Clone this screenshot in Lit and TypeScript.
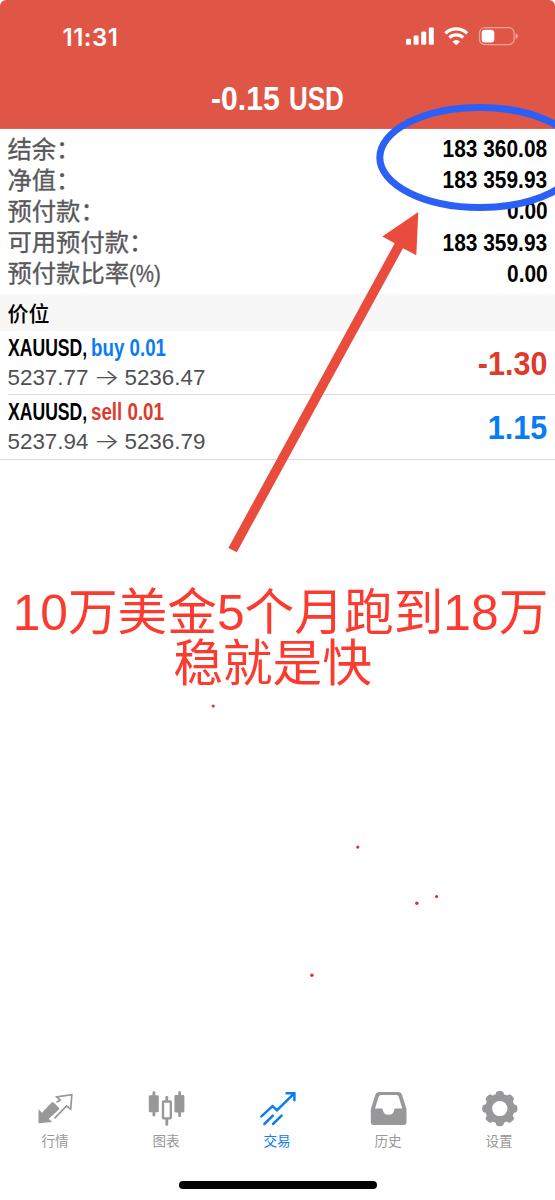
import { LitElement, html, css, svg } from "lit";
import { customElement } from "lit/decorators.js";

const summary = [
  { label: "结余：", suffix: "", value: "183 360.08" },
  { label: "净值：", suffix: "", value: "183 359.93" },
  { label: "预付款：", suffix: "", value: "0.00" },
  { label: "可用预付款：", suffix: "", value: "183 359.93" },
  { label: "预付款比率", suffix: "(%)", value: "0.00" },
];

const positions = [
  { symbol: "XAUUSD,", side: "buy", volume: "0.01", open: "5237.77", now: "5236.47", profit: "-1.30", tone: "red" },
  { symbol: "XAUUSD,", side: "sell", volume: "0.01", open: "5237.94", now: "5236.79", profit: "1.15", tone: "blue" },
];

const icons = {
  quotes: svg`
    <path fill="currentColor" d="M2.5 20.3 6 23.8 15.6 13.6q1-.8 2 0L22.9 18.8q.7.9 0 1.8L12.7 29.8 16.2 33 2.5 34.2Z"/>
    <path fill="none" stroke="currentColor" stroke-width="1.7" d="M20.5 13.2 24.2 11 20.8 7.9 35.8 5.7 34.7 20.2 30.6 17 18.5 29.4"/>`,
  chart: svg`
    <g fill="currentColor">
      <rect x="1.8" y="6.2" width="10" height="17" rx="1.3"/><rect x="5.5" y="2.2" width="2.8" height="25.2" rx="1.3"/>
      <rect x="27.4" y="6.1" width="10" height="17.3" rx="1.3"/><rect x="31.2" y="2.2" width="2.8" height="25.8" rx="1.3"/>
      <rect x="18.4" y="7" width="2.8" height="5.5" rx="1.2"/><rect x="18.4" y="29" width="2.8" height="7.8" rx="1.2"/>
    </g>
    <rect x="16" y="12.5" width="7.8" height="16.8" fill="none" stroke="currentColor" stroke-width="2.3" rx=".5"/>`,
  trade: svg`
    <path fill="none" stroke="currentColor" stroke-width="2.5" stroke-linecap="round" stroke-linejoin="miter"
      d="M3.4 27.4 14.6 17.1 19 21.2 36 4.6M28.6 4.3H36.4V11.2M6.4 35 14.8 26.6M15 35 23.6 26.6"/>`,
  history: svg`
    <path fill="currentColor" fill-rule="evenodd"
      d="M10.5 3H29Q32 3 33 5.8L37.5 20V33.6Q37.5 35.9 35.2 35.9H4.1Q1.8 35.9 1.8 33.6V20L6.4 5.8Q7.4 3 10.5 3ZM11.6 6Q10.2 6 9.7 7.5L6 19.4H12.6Q13.8 19.4 13.8 20.8A5.8 5.8 0 0 0 25.3 20.8Q25.3 19.4 26.5 19.4H33.3L29.6 7.5Q29.1 6 27.7 6Z"/>`,
  settings: svg`
    <g fill="currentColor">
      <circle cx="19.8" cy="19.6" r="14.8"/>
      ${[0, 45, 90, 135].map(
        (a) => svg`<rect x="15.7" y="2" width="8.2" height="35.2" rx="3.4" transform="rotate(${a} 19.8 19.6)"/>`
      )}
    </g>
    <circle cx="19.8" cy="19.6" r="7.7" fill="#fff"/>`,
};

const tabs = [
  { text: "行情", icon: icons.quotes, active: false },
  { text: "图表", icon: icons.chart, active: false },
  { text: "交易", icon: icons.trade, active: true },
  { text: "历史", icon: icons.history, active: false },
  { text: "设置", icon: icons.settings, active: false },
];

@customElement("app-root")
export class AppRoot extends LitElement {
  static styles = css`
    :host {
      display: flex;
      flex-direction: column;
      position: relative;
      width: 555px;
      height: 1200px;
      overflow: hidden;
      background: #fff;
      color: #000;
      font-family: "Liberation Sans", "Noto Sans CJK SC", sans-serif;
    }
    header {
      height: 129px;
      box-sizing: border-box;
      background: #df5646;
      border-bottom: 1px solid #d0695c;
      border-radius: 6px 6px 0 0;
      color: #fff;
    }
    .status {
      display: flex;
      justify-content: space-between;
      align-items: center;
      height: 74px;
      padding: 0 36px 0 62.5px;
    }
    .clock {
      font: 600 24px/28px Inter, sans-serif;
      letter-spacing: 0.5px;
      padding-top: 1px;
    }
    .status svg { display: block; }
    .total {
      display: flex;
      justify-content: center;
      gap: 9px;
      height: 50px;
      font-weight: 700;
      font-size: 33.5px;
      line-height: 50px;
    }
    .total span { display: block; white-space: nowrap; }
    .total .sum { width: 69px; }
    .total .cur { width: 55px; }
    .narrow { display: block; width: max-content; transform-origin: 0 50%; }
    .sum .narrow { transform: scaleX(0.9); }
    .cur .narrow { transform: scaleX(0.775); }
    .summary { padding: 4px 7.5px 0 7.5px; height: 165px; box-sizing: border-box; }
    .line {
      display: flex;
      justify-content: space-between;
      height: 31.2px;
      line-height: 31px;
      font-size: 24.3px;
    }
    .label {
      display: flex;
      padding-top: 0.5px;
      color: #58585a;
      -webkit-text-stroke: 0.3px #58585a;
    }
    .suffix {
      transform: scaleX(0.84);
      transform-origin: 0 50%;
    }
    .value {
      font-weight: 700;
      transform: scaleX(0.87);
      transform-origin: 100% 50%;
      font-size: 24px;
    }
    .section {
      height: 37px;
      padding-left: 7.5px;
      background: #f7f7f7;
      font: 500 21px/36px "Noto Sans CJK SC", sans-serif;
    }
    .position {
      display: flex;
      justify-content: space-between;
      align-items: center;
      height: 64px;
      box-sizing: border-box;
      margin-left: 7.5px;
      padding-right: 7.5px;
      border-bottom: 1px solid #dcdcdc;
    }
    .position.last { margin-left: 0; padding-left: 7.5px; height: 64.5px; }
    .deal { display: flex; height: 30px; font-weight: 700; font-size: 23px; line-height: 31px; }
    .symbol { width: 83.5px; }
    .symbol .narrow { transform: scaleX(0.765); }
    .side .narrow { transform: scaleX(0.815); }
    .buy, .blue { color: #097cf5; }
    .sell, .red { color: #dd3b2c; }
    .prices { display: flex; height: 30px; font-size: 22.4px; line-height: 30px; color: #505054; }
    .to {
      display: flex;
      align-items: center;
      justify-content: center;
      width: 36px;
      font: 300 22px/28px Inter, sans-serif;
      height: 28px;
    }
    .to span { transform: scaleX(1.25); }
    .profit {
      padding-top: 2px;
      font-weight: 700;
      font-size: 33.5px;
      line-height: 60px;
      transform: scaleX(0.91);
      transform-origin: 100% 50%;
    }
    .caption {
      flex: 1;
      padding-top: 128px;
      color: #fb3b30;
      font-size: 49.7px;
      line-height: 51.3px;
      text-align: center;
      white-space: nowrap;
    }
    .first { padding-left: 6px; }
    .second { padding-right: 10px; }
    nav { display: grid; grid-template-columns: repeat(5, 1fr); height: 92px; }
    .tab { display: flex; flex-direction: column; align-items: center; color: #98989a; }
    .tab.active { color: #0a7cf4; }
    .tab svg { display: block; }
    .tab span { font: 400 13.6px/20px "Noto Sans CJK SC", sans-serif; margin: 1px 1px 0 0; }
    .home { width: 198px; height: 7.4px; margin: 0 0 11.4px 179px; border-radius: 4px; background: #000; }
    .marks { position: absolute; left: 0; top: 0; pointer-events: none; }
  `;

  render() {
    return html`
      <header>
        <div class="status">
          <span class="clock">11:31</span>
          <svg width="113" height="22" viewBox="0 0 113 22" fill="#fff">
            <rect x="0" y="12.8" width="5" height="6" rx="1.2"/>
            <rect x="7.6" y="9.6" width="5" height="9.2" rx="1.2"/>
            <rect x="15.2" y="5.6" width="5" height="13.2" rx="1.2"/>
            <rect x="22.8" y="1.4" width="5" height="17.4" rx="1.2"/>
            <g fill="none" stroke="#fff" stroke-width="3.2">
              <path d="M39.4 7.4A15.4 15.4 0 0 1 61.2 7.4"/>
              <path d="M43.4 11.7A9.8 9.8 0 0 1 57.2 11.7"/>
            </g>
            <path d="M50.3 19.2 46.4 15.5A5.5 5.5 0 0 1 54.2 15.5Z"/>
            <rect x="73.5" y="1.6" width="34.6" height="17" rx="5.2" fill="none" stroke="#fff" stroke-opacity=".45" stroke-width="1.3"/>
            <rect x="75.7" y="3.7" width="12.6" height="12.8" rx="3.2"/>
            <path d="M109.6 7.2Q112 8.1 112 10.1T109.6 13Z" fill-opacity=".5"/>
          </svg>
        </div>
        <div class="total">
          <span class="sum"><span class="narrow">-0.15</span></span>
          <span class="cur"><span class="narrow">USD</span></span>
        </div>
      </header>

      <div class="summary">
        ${summary.map(
          (r) => html`<div class="line">
            <span class="label">${r.label}${r.suffix ? html`<span class="suffix">${r.suffix}</span>` : ""}</span>
            <span class="value">${r.value}</span>
          </div>`
        )}
      </div>
      <div class="section">价位</div>
      ${positions.map(
        (p, i) => html`<div class="position ${i === positions.length - 1 ? "last" : ""}">
          <div>
            <div class="deal">
              <span class="symbol"><span class="narrow">${p.symbol}</span></span>
              <span class="side ${p.side}"><span class="narrow">${p.side} ${p.volume}</span></span>
            </div>
            <div class="prices"><span>${p.open}</span><span class="to"><span>→</span></span><span>${p.now}</span></div>
          </div>
          <span class="profit ${p.tone}">${p.profit}</span>
        </div>`
      )}

      <div class="caption">
        <div class="first">10万美金5个月跑到18万</div>
        <div class="second">稳就是快</div>
      </div>

      <nav>
        ${tabs.map(
          (t) => html`<div class="tab ${t.active ? "active" : ""}">
            <svg width="40" height="40" viewBox="0 0 40 40">${t.icon}</svg>
            <span>${t.text}</span>
          </div>`
        )}
      </nav>
      <div class="home"></div>

      <svg class="marks" width="555" height="1200" viewBox="0 0 555 1200">
        <ellipse cx="480" cy="157.5" rx="100.2" ry="50" fill="none" stroke="#2a60f5" stroke-width="7"/>
        <path fill="#e94c3d" d="M418.3 212 382.3 236.4 394.7 243.3 228.3 548 236.8 552.2 403 248.2 416.3 255.2Z"/>
        <g fill="#e0302c">
          <circle cx="213.2" cy="706" r="1.6"/>
          <circle cx="357.8" cy="847.1" r="1.6"/>
          <circle cx="416.8" cy="903.3" r="1.7"/>
          <circle cx="436.6" cy="896.5" r="1.6"/>
          <circle cx="311.9" cy="975.3" r="1.7"/>
        </g>
      </svg>
    `;
  }
}
